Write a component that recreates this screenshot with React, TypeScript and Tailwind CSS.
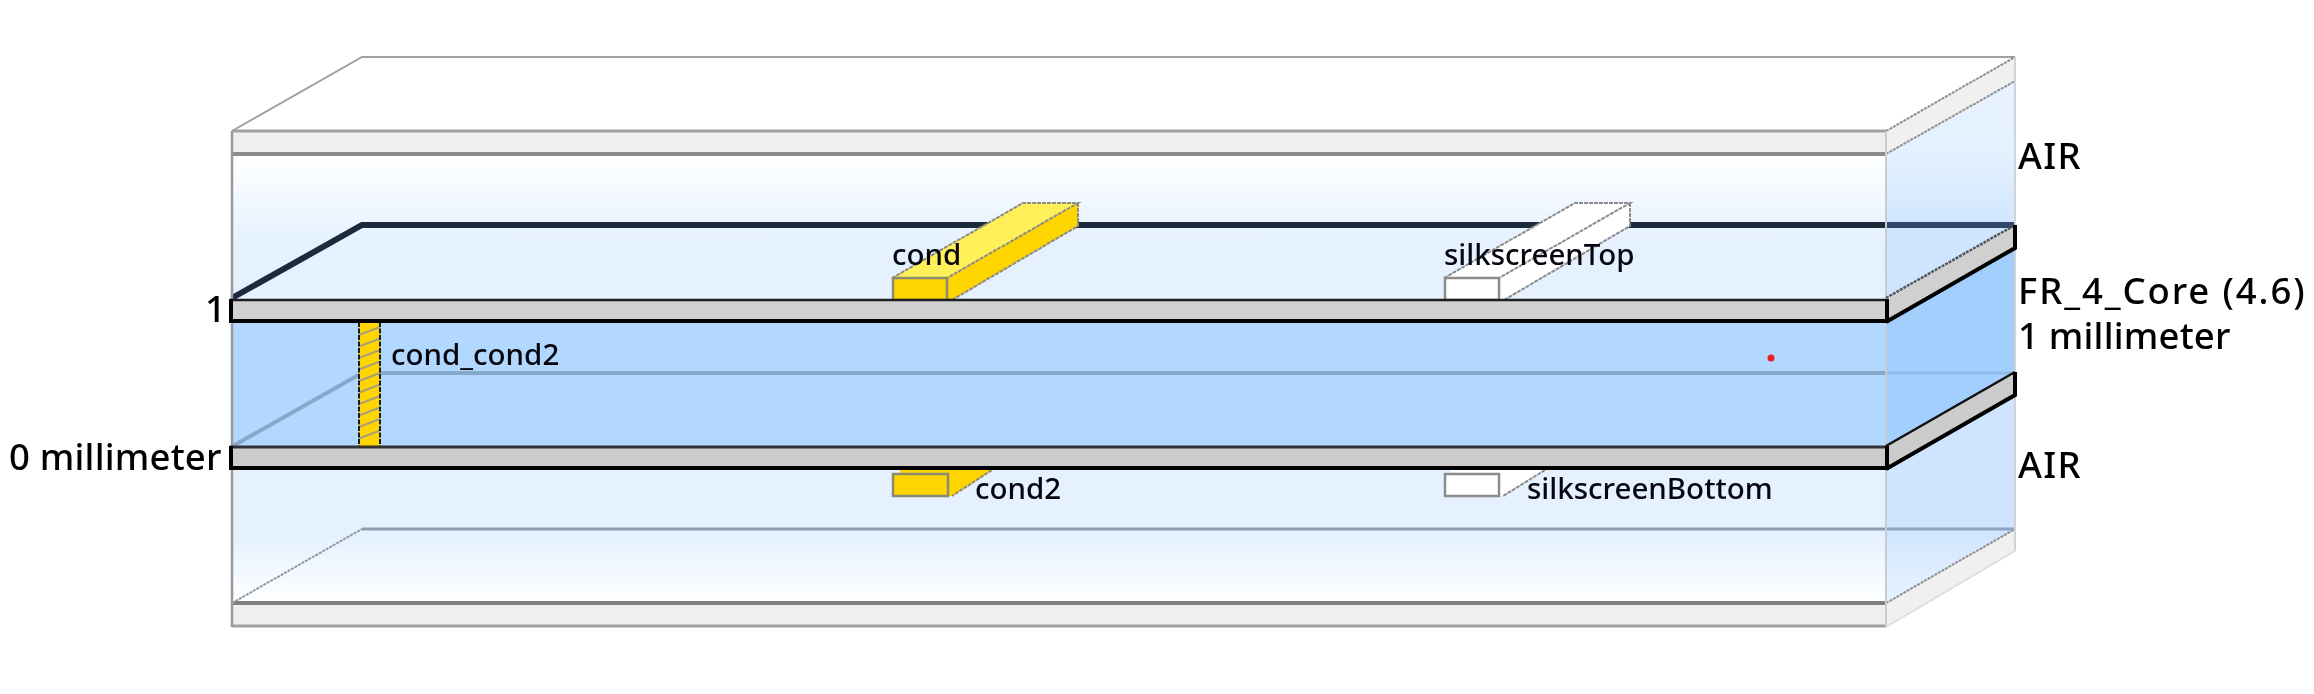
export default function App() {
  const inner = "absolute whitespace-nowrap font-['Noto_Sans',sans-serif] font-medium text-[29.5px] leading-[40px] text-[#06060f]";
  const outer = "absolute whitespace-nowrap font-['Noto_Sans',sans-serif] font-medium text-[36.5px] leading-[46px] text-black";
  return (
    <div className="relative w-[2314px] h-[694px] bg-white overflow-hidden blur-[0.5px]">
      <svg className="absolute inset-0" width="2314" height="694" viewBox="0 0 2314 694">
        <defs>
          <linearGradient id="airTop" gradientUnits="userSpaceOnUse" x1="0" y1="154" x2="0" y2="300">
            <stop offset="0" stopColor="#ffffff" />
            <stop offset="0.5" stopColor="#eaf4ff" />
            <stop offset="0.62" stopColor="#e5f1ff" />
            <stop offset="1" stopColor="#e5f1ff" />
          </linearGradient>
          <linearGradient id="airBot" gradientUnits="userSpaceOnUse" x1="0" y1="468" x2="0" y2="603">
            <stop offset="0" stopColor="#e5f1ff" />
            <stop offset="0.5" stopColor="#e5f1ff" />
            <stop offset="1" stopColor="#ffffff" />
          </linearGradient>
          <linearGradient id="sideTop" gradientUnits="userSpaceOnUse" x1="0" y1="81" x2="0" y2="300">
            <stop offset="0" stopColor="#e8f3ff" />
            <stop offset="0.35" stopColor="#e3f0ff" />
            <stop offset="0.66" stopColor="#d0e6ff" />
            <stop offset="1" stopColor="#cfe5ff" />
          </linearGradient>
          <linearGradient id="sideBot" gradientUnits="userSpaceOnUse" x1="0" y1="395" x2="0" y2="603">
            <stop offset="0" stopColor="#cfe5ff" />
            <stop offset="0.64" stopColor="#cfe5ff" />
            <stop offset="1" stopColor="#e8f3ff" />
          </linearGradient>
        </defs>

        {/* faces */}
        <rect x="232" y="154" width="1654" height="146" fill="url(#airTop)" />
        <rect x="232" y="322" width="1654" height="125" fill="#b3d8ff" />
        <rect x="232" y="468" width="1654" height="135" fill="url(#airBot)" />
        <polygon points="1886,154 2015,81 2015,226 1886,300" fill="url(#sideTop)" />
        <polygon points="1886,322 2015,248 2015,373 1886,447" fill="#a3cfff" />
        <polygon points="1886,468 2015,395 2015,529 1886,603" fill="url(#sideBot)" />

        {/* lid */}
        <polygon points="232,131 362,57 2015,57 1886,131" fill="#ffffff" />
        <rect x="232" y="131" width="1654" height="23" fill="#efefef" />
        <polygon points="1886,131 2015,57 2015,81 1886,154" fill="#f0f0f0" />
        <path d="M232,131 L362,57 L2015,57" fill="none" stroke="#a0a0a0" strokeWidth="2" />
        <path d="M232,131 H1886" stroke="#a0a0a0" strokeWidth="3" />
        <path d="M232,154 H1886" stroke="#8c8c8c" strokeWidth="4" />
        <path d="M1886,131 L2015,57 M1886,154 L2015,81" stroke="#8f8f8f" strokeWidth="2" strokeDasharray="3 1" fill="none" />

        {/* floor */}
        <rect x="232" y="603" width="1654" height="24" fill="#efefef" />
        <polygon points="1886,603 2015,529 2015,551 1886,627" fill="#f0f0f0" />
        <path d="M232,603 H1886" stroke="#808080" strokeWidth="4" />
        <path d="M232,626 H1886" stroke="#a0a0a0" strokeWidth="3" />
        <path d="M1886,603 L2015,529" stroke="#8f8f8f" strokeWidth="2" strokeDasharray="3 1" fill="none" />
        <path d="M1886,627 L2015,551" stroke="#dcdcdc" strokeWidth="1.5" fill="none" />

        {/* back planes */}
        <path d="M232,298 L362,225 H1886" fill="none" stroke="#1c2b3c" strokeWidth="6" />
        <path d="M1886,225 H2015" stroke="#30496a" strokeWidth="6" />
        <path d="M233,446 L362,373 H1886" fill="none" stroke="#86a9cb" strokeWidth="4" />
        <path d="M1886,373 H2015" stroke="#92bae6" strokeWidth="3" />
        <path d="M232,603 L362,529" stroke="#8f99a3" strokeWidth="2" strokeDasharray="3 1" fill="none" />
        <path d="M362,529 H1886" stroke="#8e9dae" strokeWidth="3" />
        <path d="M1886,529 H2015" stroke="#8ca4bd" strokeWidth="3" />

        {/* outer verticals */}
        <path d="M232,131 V627" stroke="#999999" strokeWidth="2.5" />
        <path d="M1886,131 V627" stroke="#c8ccd0" strokeWidth="2" />
        <path d="M2015,57 V551" stroke="#d0d4d8" strokeWidth="2" />

        {/* top conductors */}
        <polygon points="947,278 1078,203 1078,226 952,300 947,300" fill="#ffd500" />
        <polygon points="892,278 1023,203 1078,203 947,278" fill="#fff05a" />
        <path d="M892,278 L1023,203 H1078 L947,278 M1078,203 V226 L952,300" fill="none" stroke="#8c8c80" strokeWidth="2" strokeDasharray="4 1" />
        <rect x="893" y="278" width="54" height="22" fill="#ffd500" stroke="#8a8a70" strokeWidth="2.5" />
        <polygon points="1444,278 1575,203 1630,203 1630,226 1504,300 1499,300 1499,278" fill="#ffffff" />
        <path d="M1444,278 L1575,203 H1630 L1499,278 M1630,203 V226 L1504,300" fill="none" stroke="#8c8c8c" strokeWidth="2" strokeDasharray="4 1" />
        <rect x="1445" y="278" width="54" height="22" fill="#ffffff" stroke="#8c8c8c" strokeWidth="2.5" />

        {/* bottom conductors */}
        <polygon points="900,470 992,470 952,496 948,496 948,473 900,473" fill="#ffd500" />
        <path d="M992,470 L952,496" fill="none" stroke="#8c8c70" strokeWidth="2" strokeDasharray="4 1" />
        <rect x="893" y="474" width="55" height="22" fill="#ffd500" stroke="#8a8a70" strokeWidth="2.5" />
        <polygon points="1450,470 1545,470 1503,496 1499,496 1499,473 1450,473" fill="#ffffff" />
        <path d="M1545,470 L1503,496" fill="none" stroke="#8c8c8c" strokeWidth="2" strokeDasharray="4 1" />
        <rect x="1445" y="474" width="54" height="22" fill="#ffffff" stroke="#8c8c8c" strokeWidth="2.5" />

        {/* via */}
        <rect x="359" y="322" width="21" height="125" fill="#ffd500" />
        <path
          d="M359,335 L380,327 M359,346.5 L380,338.5 M359,358 L380,350 M359,369.5 L380,361.5 M359,381 L380,373 M359,392.5 L380,384.5 M359,404 L380,396 M359,415.5 L380,407.5 M359,427 L380,419 M359,438.5 L380,430.5"
          stroke="#a8a078"
          strokeWidth="2"
        />
        <path d="M359,322 V447 M380,322 V447" stroke="#1a1a1a" strokeWidth="2" strokeDasharray="5 1.5" />

        {/* metal slabs */}
        <rect x="231" y="300" width="1655" height="22" fill="#d0d0d0" />
        <rect x="231" y="447" width="1655" height="22" fill="#cccccc" />
        <polygon points="1886,300 2015,226 2015,248 1886,322" fill="#d0d0d0" />
        <polygon points="1886,447 2015,373 2015,395 1886,468" fill="#cccccc" />
        <path d="M230,300 H1886" stroke="#1e1e1e" strokeWidth="2.5" />
        <path d="M230,321 H1886" stroke="#000000" strokeWidth="4" />
        <path d="M231,299 V323" stroke="#000000" strokeWidth="4" />
        <path d="M230,447 H1886" stroke="#333333" strokeWidth="3" />
        <path d="M230,468 H1886" stroke="#000000" strokeWidth="4" />
        <path d="M231,446 V470" stroke="#000000" strokeWidth="4" />
        <path d="M1887,299 V323 M1887,446 V470" stroke="#000000" strokeWidth="4" />
        <path d="M1886,298 L2015,225" stroke="#555555" strokeWidth="2.5" strokeDasharray="3 1" fill="none" />
        <path d="M1886,322 L2015,248 V225" stroke="#000000" strokeWidth="4" fill="none" />
        <path d="M1886,446 L2015,372" stroke="#111111" strokeWidth="2.5" fill="none" />
        <path d="M1886,469 L2015,395 V372" stroke="#000000" strokeWidth="4" fill="none" />

        <circle cx="1771" cy="358" r="3.5" fill="#ee1c25" />
      </svg>

      <span className={`${outer} left-[205px] top-[285px]`}>1</span>
      <span className={`${outer} left-[9px] top-[433px] tracking-[0.2px]`}>0 millimeter</span>
      <span className={`${inner} left-[391px] top-[334px]`}>cond_cond2</span>
      <span className={`${inner} left-[892px] top-[234px]`}>cond</span>
      <span className={`${inner} left-[1444px] top-[234px]`}>silkscreenTop</span>
      <span className={`${inner} left-[975px] top-[468px]`}>cond2</span>
      <span className={`${inner} left-[1527px] top-[468px]`}>silkscreenBottom</span>
      <span className={`${outer} left-[2018px] top-[132px] tracking-[1.3px]`}>AIR</span>
      <span className={`${outer} left-[2018px] top-[267px] tracking-[1.9px]`}>FR_4_Core (4.6)</span>
      <span className={`${outer} left-[2018px] top-[312px] tracking-[0.2px]`}>1 millimeter</span>
      <span className={`${outer} left-[2018px] top-[441px] tracking-[1.3px]`}>AIR</span>
    </div>
  );
}
